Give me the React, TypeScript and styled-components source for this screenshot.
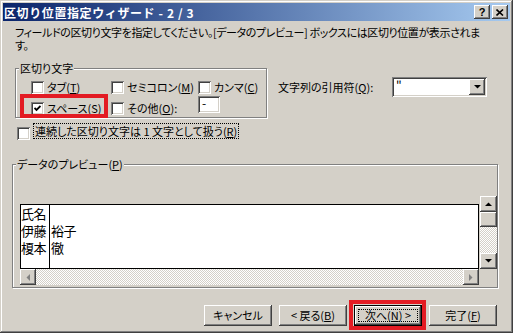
import React from "react";
import styled, { createGlobalStyle, css } from "styled-components";

const FACE = "#D4D0C8";

const GlobalStyle = createGlobalStyle`
  html, body { margin: 0; padding: 0; background: ${FACE}; }
  body {
    font-family: "Noto Sans CJK JP", "Noto Sans", sans-serif;
    font-size: 11px;
    color: #000;
  }
  * { box-sizing: border-box; }
`;

const raised = css`
  background: ${FACE};
  box-shadow: inset -1px -1px #404040, inset 1px 1px #fff,
    inset -2px -2px #808080, inset 2px 2px ${FACE};
`;

const sunken = css`
  box-shadow: inset 1px 1px #808080, inset -1px -1px #fff,
    inset 2px 2px #404040, inset -2px -2px ${FACE};
`;

const Window = styled.div`
  width: 513px;
  height: 333px;
  padding: 3px;
  display: flex;
  flex-direction: column;
  background: ${FACE};
  box-shadow: inset -1px -1px #404040, inset 1px 1px ${FACE},
    inset -2px -2px #808080, inset 2px 2px #fff;
  font-feature-settings: "palt";
  line-height: 13px;
`;

const TitleBar = styled.div`
  height: 18px;
  flex: none;
  display: flex;
  align-items: center;
  padding: 0 2px 0 1px;
  background: linear-gradient(to right, #0a246a, #a6caf0);
`;

const TitleText = styled.span`
  color: #fff;
  font-weight: bold;
  font-size: 12px;
  letter-spacing: 0.6px;
  font-feature-settings: normal;
  white-space: pre;
`;

const TitleButtons = styled.div`
  margin-left: auto;
  display: flex;
  gap: 2px;
`;

const CaptionButton = styled.div`
  width: 16px;
  height: 14px;
  ${raised};
  display: flex;
  align-items: center;
  justify-content: center;
  font-family: "Liberation Sans", sans-serif;
  font-weight: bold;
  font-size: 11px;
  line-height: 14px;
`;

const Description = styled.div`
  margin: 5px 0 0 12px;
  line-height: 13px;
  letter-spacing: -0.4px;
`;

const DescLine = styled.div`
  white-space: nowrap;
  height: 13px;
`;

const OptionsRow = styled.div`
  display: flex;
  align-items: flex-start;
  margin: 10px 0 0 12px;
`;

const Group = styled.fieldset<{ $width: number }>`
  margin: 0;
  padding: 0;
  width: ${(p) => p.$width}px;
  border: 1px solid #808080;
  box-shadow: 1px 1px 0 #fff, inset 1px 1px 0 #fff;
  min-width: 0;
  flex: none;
`;

const Legend = styled.legend`
  margin-left: 3px;
  padding: 0 1px;
  line-height: 13px;
  background: ${FACE};
`;

const DelimGrid = styled.div`
  display: grid;
  grid-template-columns: 80px 87px auto;
  grid-template-rows: 13px 19px;
  row-gap: 2px;
  padding: 6px 0 2px 15px;
`;

const CheckItem = styled.label<{ $align?: string }>`
  display: flex;
  align-items: center;
  gap: 3px;
  height: 13px;
  align-self: ${(p) => p.$align || "start"};
  position: relative;
  white-space: nowrap;
`;

const Box = styled.span`
  width: 13px;
  height: 13px;
  flex: none;
  background: #fff;
  ${sunken};
  display: flex;
  align-items: center;
  justify-content: center;
`;

const Highlight = styled.span<{ $l: number; $t: number; $w: number; $h: number }>`
  position: absolute;
  left: ${(p) => p.$l}px;
  top: ${(p) => p.$t}px;
  width: ${(p) => p.$w}px;
  height: ${(p) => p.$h}px;
  border: 4px solid #e31b23;
  pointer-events: none;
`;

const SmallInput = styled.div`
  width: 22px;
  height: 17px;
  background: #fff;
  ${sunken};
  padding: 1px 0 0 4px;
  line-height: 11px;
  font-size: 12px;
  align-self: start;
`;

const QuoteField = styled.div`
  display: flex;
  align-items: center;
  margin: 15px 0 0 11px;
`;

const QuoteLabel = styled.span`
  width: 114px;
  white-space: nowrap;
`;

const Combo = styled.div`
  width: 95px;
  height: 20px;
  background: #fff;
  ${sunken};
  display: flex;
  padding: 2px;
`;

const ComboText = styled.span`
  flex: 1;
  padding: 1px 0 0 2px;
  line-height: 10px;
  font-size: 12px;
  color: #000;
`;

const ArrowButton = styled.div<{ $w?: number; $h?: number }>`
  width: ${(p) => p.$w ?? 16}px;
  height: ${(p) => p.$h ?? 16}px;
  flex: none;
  ${raised};
  display: flex;
  align-items: center;
  justify-content: center;
`;

const ConsecutiveRow = styled.label`
  display: flex;
  align-items: flex-start;
  gap: 3px;
  margin: 5px 0 0 14px;
`;

const FocusText = styled.span`
  border: 1px dotted #000;
  padding: 0 1px;
  height: 16px;
  line-height: 14px;
  white-space: nowrap;
`;

const BoxShift = styled.span`
  margin-top: 4px;
  display: flex;
`;

const PreviewGroup = styled(Group)`
  margin: 18px 0 0 9px;
`;

const PreviewBody = styled.div`
  display: flex;
  align-items: flex-start;
  padding: 25px 0 2px 7px;
`;

const PreviewLeft = styled.div`
  width: 459px;
  margin-top: 8px;
  display: flex;
  flex-direction: column;
`;

const DataBox = styled.div`
  height: 65px;
  background: #fff;
  border: 1px solid #000;
  display: grid;
  grid-template-columns: 29px 1fr;
  font-size: 13px;
  line-height: 17px;
  font-feature-settings: normal;
`;

const DataCol = styled.div<{ $divider?: boolean }>`
  border-right: ${(p) => (p.$divider ? "1px solid #000" : "none")};
  padding-left: ${(p) => (p.$divider ? 0 : 1)}px;
  white-space: nowrap;
  letter-spacing: -0.5px;
`;

const dither = css`
  background-color: #fff;
  background-image: repeating-conic-gradient(${FACE} 0 25%, #fff 0 50%);
  background-size: 2px 2px;
`;

const HScroll = styled.div`
  height: 16px;
  display: flex;
  justify-content: space-between;
  ${dither};
`;

const VScroll = styled.div`
  width: 17px;
  height: 73px;
  margin-left: 1px;
  display: flex;
  flex-direction: column;
  ${dither};
`;

const Thumb = styled.div`
  height: 15px;
  ${raised};
`;

const VTrack = styled.div`
  flex: 1;
`;

const ButtonRow = styled.div`
  display: flex;
  justify-content: flex-end;
  gap: 7px;
  margin-top: 17px;
  padding-right: 13px;
`;

const PushButton = styled.div<{ $default?: boolean }>`
  position: relative;
  width: 68px;
  height: 21px;
  display: flex;
  align-items: center;
  justify-content: center;
  white-space: pre;
  background: ${FACE};
  ${(p) =>
    p.$default
      ? css`
          box-shadow: inset 0 0 0 1px #000, inset -2px -2px #404040,
            inset 2px 2px #fff, inset -3px -3px #808080;
        `
      : css`
          box-shadow: inset -1px -1px #404040, inset 1px 1px #fff,
            inset -2px -2px #808080;
        `}
`;

const FocusRing = styled.span`
  position: absolute;
  inset: 4px;
  border: 1px dotted #000;
  pointer-events: none;
`;

type Dir = "up" | "down" | "left" | "right";

const Tri = ({ dir, color = "#000" }: { dir: Dir; color?: string }) => {
  const pts: Record<Dir, string> = {
    up: "0,4 7,4 3.5,0.5",
    down: "0,0 7,0 3.5,3.5",
    left: "4,0 4,7 0.5,3.5",
    right: "0,0 0,7 3.5,3.5",
  };
  const vertical = dir === "up" || dir === "down";
  return (
    <svg width={vertical ? 7 : 4} height={vertical ? 4 : 7} viewBox={vertical ? "0 0 7 4" : "0 0 4 7"}>
      <polygon points={pts[dir]} fill={color} />
    </svg>
  );
};

const CheckMark = () => (
  <svg width="7" height="7" viewBox="0 0 7 7">
    <polyline points="0.5,3 2.5,5 6.5,1" fill="none" stroke="#000" strokeWidth="1.8" />
  </svg>
);

const CheckBox = ({ checked }: { checked?: boolean }) => <Box>{checked && <CheckMark />}</Box>;

const CloseGlyph = () => (
  <svg width="8" height="7" viewBox="0 0 8 7">
    <path d="M0.5 0.5 L7 6.5 M7 0.5 L0.5 6.5" stroke="#000" strokeWidth="1.6" />
  </svg>
);

export default function App() {
  return (
    <>
      <GlobalStyle />
      <Window>
        <TitleBar>
          <TitleText>区切り位置指定ウィザード - 2 / 3</TitleText>
          <TitleButtons>
            <CaptionButton>?</CaptionButton>
            <CaptionButton>
              <CloseGlyph />
            </CaptionButton>
          </TitleButtons>
        </TitleBar>

        <Description>
          <DescLine>
            フィールドの区切り文字を指定してください。[データのプレビュー] ボックスには区切り位置が表示されま
          </DescLine>
          <DescLine>す。</DescLine>
        </Description>

        <OptionsRow>
          <Group $width={252}>
            <Legend>区切り文字</Legend>
            <DelimGrid>
              <CheckItem>
                <CheckBox />
                <span>
                  タブ(<u>T</u>)
                </span>
              </CheckItem>
              <CheckItem>
                <CheckBox />
                <span>
                  セミコロン(<u>M</u>)
                </span>
              </CheckItem>
              <CheckItem>
                <CheckBox />
                <span>
                  カンマ(<u>C</u>)
                </span>
              </CheckItem>
              <CheckItem $align="end">
                <CheckBox checked />
                <span>
                  スペース(<u>S</u>)
                </span>
                <Highlight $l={-11} $t={-8} $w={88} $h={24} />
              </CheckItem>
              <CheckItem $align="end">
                <CheckBox />
                <span>
                  その他(<u>O</u>):
                </span>
              </CheckItem>
              <SmallInput>-</SmallInput>
            </DelimGrid>
          </Group>
          <QuoteField>
            <QuoteLabel>
              文字列の引用符(<u>Q</u>):
            </QuoteLabel>
            <Combo>
              <ComboText>"</ComboText>
              <ArrowButton $w={16} $h={16}>
                <Tri dir="down" />
              </ArrowButton>
            </Combo>
          </QuoteField>
        </OptionsRow>

        <ConsecutiveRow>
          <BoxShift>
            <CheckBox />
          </BoxShift>
          <FocusText>
            連続した区切り文字は 1 文字として扱う(<u>R</u>)
          </FocusText>
        </ConsecutiveRow>

        <PreviewGroup $width={486}>
          <Legend>
            データのプレビュー(<u>P</u>)
          </Legend>
          <PreviewBody>
            <PreviewLeft>
              <DataBox>
                <DataCol $divider>
                  氏名
                  <br />
                  伊藤
                  <br />
                  榎本
                </DataCol>
                <DataCol>
                  <br />
                  裕子
                  <br />
                  徹
                </DataCol>
              </DataBox>
              <HScroll>
                <ArrowButton>
                  <Tri dir="left" color="#808080" />
                </ArrowButton>
                <ArrowButton>
                  <Tri dir="right" color="#808080" />
                </ArrowButton>
              </HScroll>
            </PreviewLeft>
            <VScroll>
              <ArrowButton $w={17}>
                <Tri dir="up" />
              </ArrowButton>
              <Thumb />
              <VTrack />
              <ArrowButton $w={17}>
                <Tri dir="down" />
              </ArrowButton>
            </VScroll>
          </PreviewBody>
        </PreviewGroup>

        <ButtonRow>
          <PushButton>
            <span>キャンセル</span>
          </PushButton>
          <PushButton>
            <span>
              &lt; 戻る(<u>B</u>)
            </span>
          </PushButton>
          <PushButton $default>
            <span>
              次へ(<u>N</u>) &gt;
            </span>
            <FocusRing />
            <Highlight $l={-5} $t={-5} $w={77} $h={30} />
          </PushButton>
          <PushButton>
            <span>
              完了(<u>F</u>)
            </span>
          </PushButton>
        </ButtonRow>
      </Window>
    </>
  );
}
